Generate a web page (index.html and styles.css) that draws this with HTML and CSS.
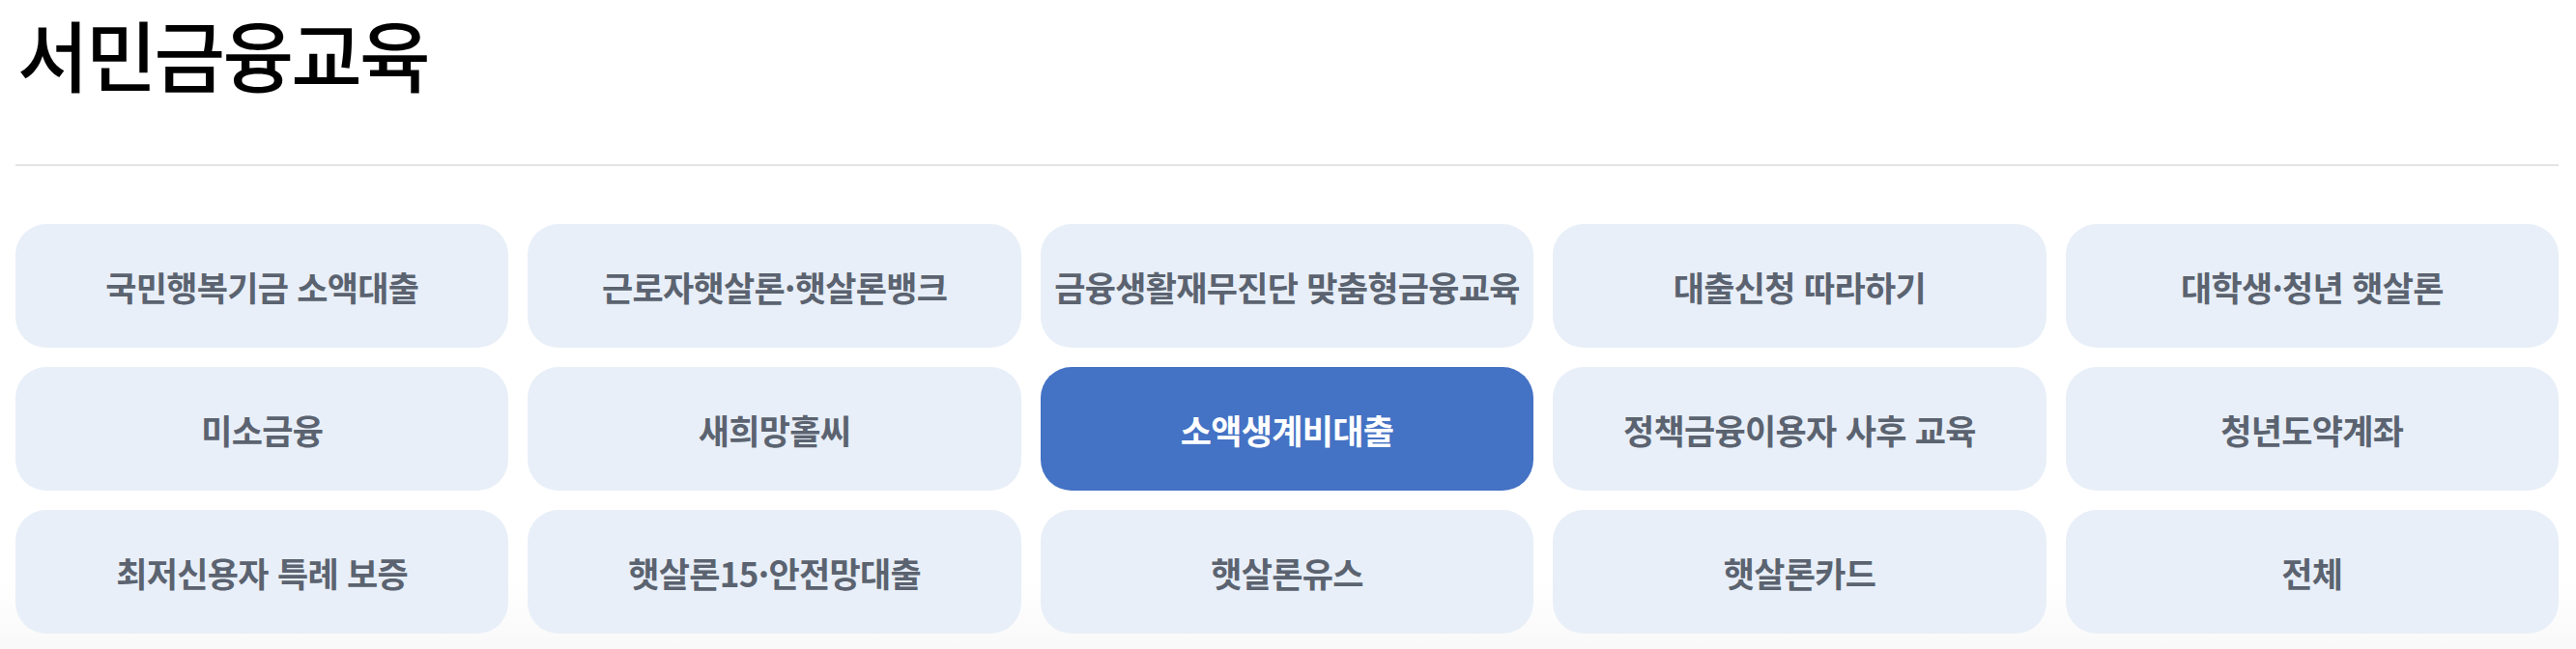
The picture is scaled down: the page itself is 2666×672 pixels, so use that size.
FILE: index.html
```html
<!DOCTYPE html>
<html lang="ko">
<head>
  <meta charset="UTF-8">
  <meta name="viewport" content="width=device-width, initial-scale=1.0">
  <title>서민금융교육</title>
  <link rel="stylesheet" href="styles.css">
</head>
<body>
  <div class="page">
    <h1 class="title">서민금융교육</h1>

    <ul class="category-list">
      <li><a href="#" class="category">국민행복기금 소액대출</a></li>
      <li><a href="#" class="category">근로자햇살론·햇살론뱅크</a></li>
      <li><a href="#" class="category">금융생활재무진단 맞춤형금융교육</a></li>
      <li><a href="#" class="category">대출신청 따라하기</a></li>
      <li><a href="#" class="category">대학생·청년 햇살론</a></li>
      <li><a href="#" class="category">미소금융</a></li>
      <li><a href="#" class="category">새희망홀씨</a></li>
      <li><a href="#" class="category active">소액생계비대출</a></li>
      <li><a href="#" class="category">정책금융이용자 사후 교육</a></li>
      <li><a href="#" class="category">청년도약계좌</a></li>
      <li><a href="#" class="category">최저신용자 특례 보증</a></li>
      <li><a href="#" class="category">햇살론15·안전망대출</a></li>
      <li><a href="#" class="category">햇살론유스</a></li>
      <li><a href="#" class="category">햇살론카드</a></li>
      <li><a href="#" class="category">전체</a></li>
    </ul>
  </div>
</body>
</html>
```

FILE: styles.css
```css
html, body {
  margin: 0;
  padding: 0;
}
body {
  font-family: "Noto Sans CJK KR", "Noto Sans", sans-serif;
  background: linear-gradient(to bottom, #fff 0, #fff 600px, #f9f9f9 672px);
  min-height: 672px;
}
.page {
  padding: 0 18px 0 16px;
}
.title {
  margin: 0;
  padding: 6px 0 0 2px;
  height: 172px;
  box-sizing: border-box;
  font-size: 80px;
  line-height: 96px;
  font-weight: 500;
  letter-spacing: -0.035em;
  color: #000;
  border-bottom: 2px solid #e5e5e5;
}
.category-list {
  list-style: none;
  margin: 60px 0 0;
  padding: 0;
  display: grid;
  grid-template-columns: repeat(5, 1fr);
  gap: 20px;
}
.category {
  display: flex;
  align-items: center;
  justify-content: center;
  height: 128px;
  border-radius: 32px;
  background: #e8eff8;
  color: #5b6370;
  font-size: 35px;
  font-weight: 700;
  letter-spacing: -0.02em;
  text-decoration: none;
}
.category.active {
  background: #4472c4;
  color: #fff;
}
```
